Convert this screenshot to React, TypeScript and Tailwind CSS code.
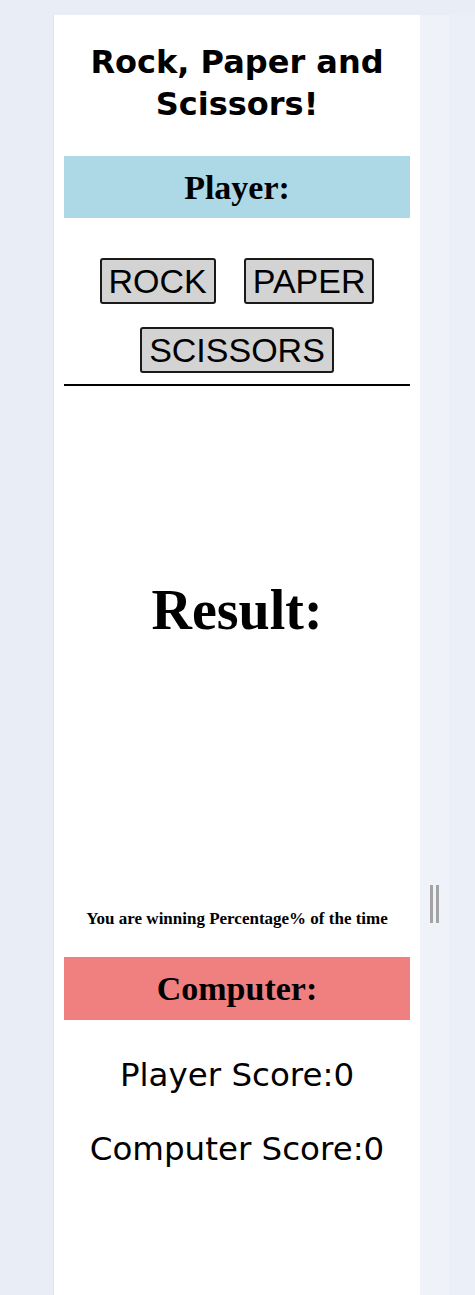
export default function App() {
  return (
    <div className="flex min-h-[1295px] w-[475px] bg-[#e9eef6] pt-[15px]">
      <div className="w-[53px] shrink-0" />

      {/* game card */}
      <div className="flex w-[367px] shrink-0 flex-col border-l border-[#dfe4ec] bg-white px-[10px] pt-[26px]">
        <h1 className="text-center text-[32px] font-bold leading-[42px] text-black [font-family:'DejaVu_Sans',sans-serif]">
          Rock, Paper and
          <br />
          Scissors!
        </h1>

        <div className="mt-[31px] flex h-[62px] items-center justify-center bg-[#add8e6]">
          <h2 className="text-[34px] font-bold text-black [font-family:'Liberation_Serif',serif]">
            Player:
          </h2>
        </div>

        <div className="mt-[40px] flex flex-col items-center gap-[23px]">
          <div className="flex gap-[28px]">
            <Choice label="ROCK" />
            <Choice label="PAPER" />
          </div>
          <Choice label="SCISSORS" />
        </div>

        <div className="mt-[11px] h-[2px] bg-black" />

        <div className="flex h-[448px] items-center justify-center">
          <h2 className="text-[56px] font-bold text-black [font-family:'Liberation_Serif',serif]">
            Result:
          </h2>
        </div>

        <p className="mt-[75px] text-center text-[17px] font-bold leading-[20px] text-black [font-family:'Liberation_Serif',serif]">
          You are winning Percentage% of the time
        </p>

        <div className="mt-[28px] flex h-[63px] items-center justify-center bg-[#f08080]">
          <h2 className="text-[34px] font-bold text-black [font-family:'Liberation_Serif',serif]">
            Computer:
          </h2>
        </div>

        <p className="mt-[35px] text-center text-[32.5px] leading-[40px] text-black [font-family:'DejaVu_Sans',sans-serif]">
          Player Score:0
        </p>
        <p className="mt-[34px] text-center text-[32.5px] leading-[40px] text-black [font-family:'DejaVu_Sans',sans-serif]">
          Computer Score:0
        </p>
      </div>

      {/* resize strip */}
      <div className="flex w-[29px] shrink-0 flex-col bg-[#eff3f9] pt-[870px]">
        <div className="ml-[10px] flex gap-[3px]">
          <span className="h-[38px] w-[3px] bg-[#a3a3a3]" />
          <span className="h-[38px] w-[3px] bg-[#a3a3a3]" />
        </div>
      </div>

      <div className="flex-1 bg-[#ebeff8]" />
    </div>
  );
}

function Choice({ label }: { label: string }) {
  return (
    <button className="rounded-[3px] border-2 border-[#1a1a1a] bg-[#d3d3d3] px-[7px] py-[2px] text-[34px] leading-[38px] text-black [font-family:'Liberation_Sans',Arial,sans-serif]">
      {label}
    </button>
  );
}
